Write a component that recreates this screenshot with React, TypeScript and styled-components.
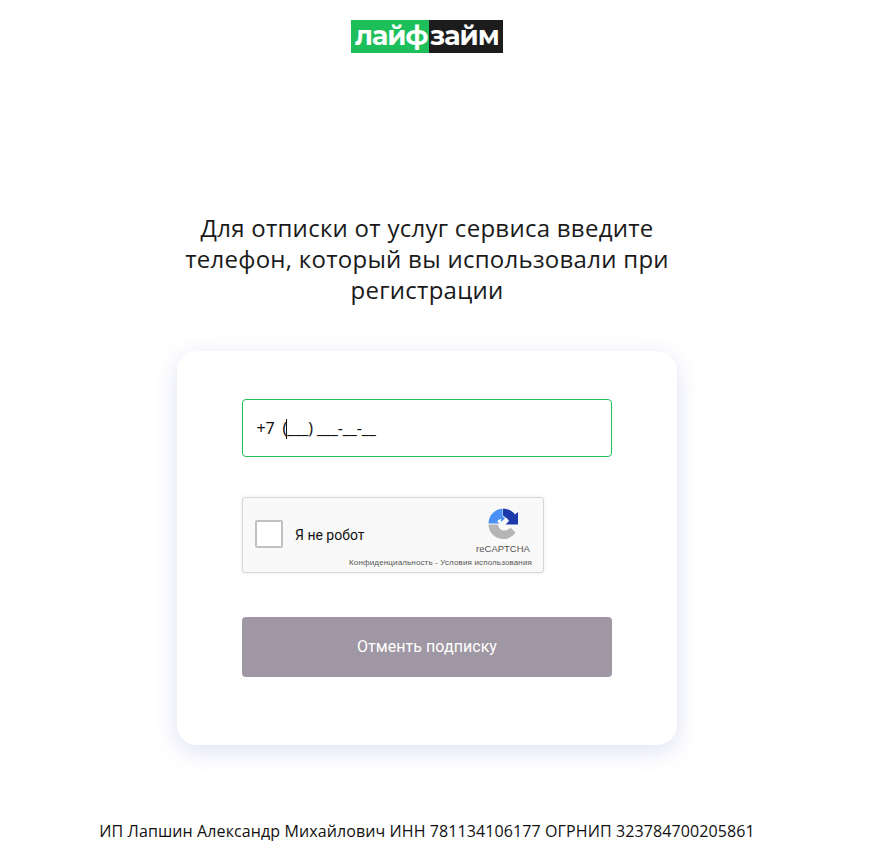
import React from "react";
import styled, { createGlobalStyle } from "styled-components";

const GlobalStyle = createGlobalStyle`
  html, body {
    margin: 0;
    padding: 0;
    background: #fff;
    font-family: "Open Sans", "Noto Sans", sans-serif;
    color: #1a1a1a;
  }
`;

const Page = styled.div`
  width: 854px;
  height: 860px;
  overflow: hidden;
  display: flex;
  flex-direction: column;
  align-items: center;
  padding-top: 20px;
  box-sizing: border-box;
`;

const Logo = styled.div`
  display: flex;
  height: 33px;
  font-family: "Montserrat", "Inter", "Noto Sans", sans-serif;
  font-size: 27px;
  font-weight: 700;
  line-height: 31px;
  color: #fff;
`;

const LogoPart = styled.span<{ $bg: string; $width: number; $pad: number }>`
  display: block;
  width: ${({ $width }) => $width}px;
  padding-left: ${({ $pad }) => $pad}px;
  box-sizing: border-box;
  background: ${({ $bg }) => $bg};
  letter-spacing: -1px;
  white-space: nowrap;
`;

const Heading = styled.h1`
  width: 500px;
  margin: 159px 0 0;
  font-size: 24px;
  font-weight: 400;
  letter-spacing: 0.27px;
  line-height: 31px;
  text-align: center;
  color: #1a1a1a;
`;

const Card = styled.div`
  width: 500px;
  height: 394px;
  margin-top: 46px;
  padding: 48px 65px 0;
  box-sizing: border-box;
  display: flex;
  flex-direction: column;
  background: #fff;
  border-radius: 20px;
  box-shadow: 0 6px 22px rgba(60, 80, 190, 0.17);
`;

const PhoneField = styled.div`
  height: 58px;
  box-sizing: border-box;
  display: flex;
  align-items: center;
  padding: 0 13.5px;
  border: 1px solid #1dbf5a;
  border-radius: 4px;
  font-family: "Noto Sans", sans-serif;
  font-size: 16px;
  letter-spacing: -0.13px;
  color: #111;
  white-space: pre;
  position: relative;
`;

const Caret = styled.span`
  position: absolute;
  left: 43px;
  top: 19px;
  width: 1px;
  height: 20px;
  background: #111;
`;

const Captcha = styled.div`
  width: 302px;
  height: 76px;
  margin-top: 40px;
  box-sizing: border-box;
  position: relative;
  display: flex;
  align-items: flex-start;
  padding: 22px 0 0 12px;
  background: #f9f9f9;
  border: 1px solid #d6d6d6;
  border-radius: 3px;
  box-shadow: 0 0 4px rgba(0, 0, 0, 0.08);
  font-family: Roboto, "Liberation Sans", sans-serif;
`;

const CheckBox = styled.div`
  width: 28px;
  height: 28px;
  box-sizing: border-box;
  background: #fff;
  border: 2px solid #c1c1c1;
  border-radius: 2px;
`;

const CaptchaLabel = styled.span`
  margin: 6px 0 0 12px;
  font-size: 14px;
  line-height: 18px;
  color: #111;
`;

const Badge = styled.div`
  position: absolute;
  right: 12px;
  top: 10px;
  width: 56px;
  display: flex;
  flex-direction: column;
  align-items: center;
`;

const BadgeName = styled.span`
  margin-top: 3px;
  font-family: "Liberation Sans", Arial, sans-serif;
  font-size: 9.5px;
  line-height: 12px;
  color: #555;
  white-space: nowrap;
`;

const Terms = styled.span`
  position: absolute;
  right: 11px;
  bottom: 3px;
  font-family: "Liberation Sans", Arial, sans-serif;
  font-size: 8px;
  letter-spacing: 0.14px;
  line-height: 12px;
  color: #555;
  white-space: nowrap;
`;

const SubmitButton = styled.button`
  height: 60px;
  margin-top: 44px;
  padding: 0 0 2px;
  border: 0;
  border-radius: 4px;
  background: #9f97a3;
  color: #fff;
  font-family: Roboto, "Noto Sans", sans-serif;
  font-size: 16px;
  font-weight: 400;
  letter-spacing: 0.05px;
`;

const Footer = styled.div`
  margin-top: 75px;
  font-size: 16px;
  letter-spacing: 0.1px;
  line-height: 22px;
  color: #111;
  white-space: nowrap;
`;

const RecaptchaIcon = () => (
  <svg width="31" height="32" viewBox="0 0 31 32">
    <path
      d="M0.5 15.5 C0.8 7.5 6.5 1 14.5 0.8 L14.5 8 L17 10.5 L13 14 L13 10.8 C11.5 11.2 10 12.2 9.2 13.5 L11.5 15.5 Z"
      fill="#4a90f5"
    />
    <path
      d="M15 0.8 C20.5 0.8 24.5 3 27 6.5 L30 4 L30 16.5 L17.5 16.5 L21 13 C20 11 18.8 10 17.5 9.5 L15 7.5 Z"
      fill="#1c3aa9"
    />
    <path
      d="M0.5 16.5 L10 16.5 C10.5 20.5 13 22.5 16.5 22.5 C19 22.5 21 21.5 22.5 19.5 L27.5 24.5 C24.5 28.5 20.5 31 15.5 31 C7 31 0.5 24.5 0.5 16.5 Z"
      fill="#b5b5b5"
    />
  </svg>
);

export default function App() {
  return (
    <Page>
      <GlobalStyle />
      <Logo>
        <LogoPart $bg="#1dbf5a" $width={78} $pad={4}>
          лайф
        </LogoPart>
        <LogoPart $bg="#1c1c1c" $width={74} $pad={1}>
          займ
        </LogoPart>
      </Logo>
      <Heading>
        Для отписки от услуг сервиса введите телефон, который вы использовали при регистрации
      </Heading>
      <Card>
        <PhoneField>
          +7  (___) ___-__-__
          <Caret />
        </PhoneField>
        <Captcha>
          <CheckBox />
          <CaptchaLabel>Я не робот</CaptchaLabel>
          <Badge>
            <RecaptchaIcon />
            <BadgeName>reCAPTCHA</BadgeName>
          </Badge>
          <Terms>Конфиденциальность - Условия использования</Terms>
        </Captcha>
        <SubmitButton>Отменть подписку</SubmitButton>
      </Card>
      <Footer>ИП Лапшин Александр Михайлович ИНН 781134106177 ОГРНИП 323784700205861</Footer>
    </Page>
  );
}
